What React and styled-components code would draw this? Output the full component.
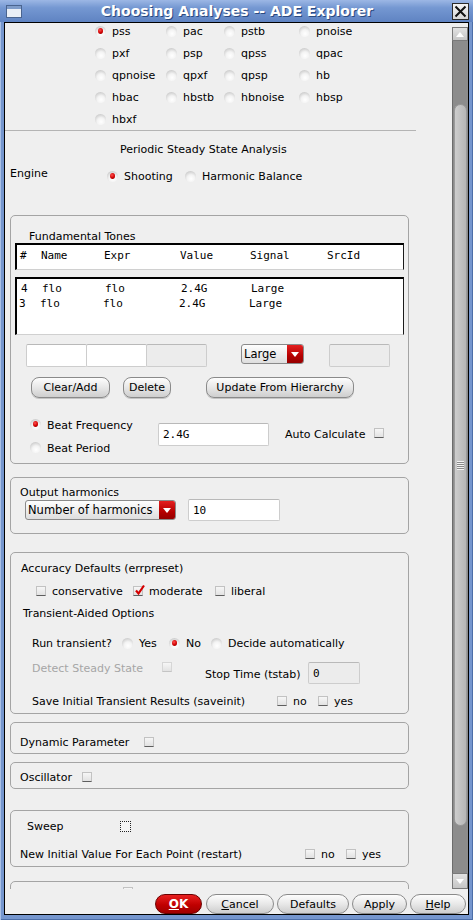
import React from 'react';
import styled, {createGlobalStyle, css} from 'styled-components';

const UI = '"DejaVu Sans", "Liberation Sans", sans-serif';
const MONO = '"DejaVu Sans Mono", "Liberation Mono", monospace';

const GlobalStyle = createGlobalStyle`
    html, body {
        margin: 0;
        padding: 0;
        background: #7596ce;
    }
    body {
        font-family: ${UI};
        font-size: 11px;
        color: #000;
    }
    * {
        box-sizing: border-box;
    }
`;

const Window = styled.div`
    width: 473px;
    height: 920px;
    display: flex;
    flex-direction: column;
    padding: 0 4px 5px;
    background: #7596ce;
    box-shadow: inset 1px 0 0 #a9c0e6, inset -1px 0 0 #4c6ea8, inset 0 -1px 0 #4c6ea8;
`;

const TitleBar = styled.div`
    height: 22px;
    margin: 0 -4px;
    display: flex;
    align-items: center;
    padding: 0 4px 0 6px;
    background: linear-gradient(#9cb7e5 0%, #7598d2 35%, #5f83c2 100%);
`;

const Title = styled.div`
    flex: 1;
    text-align: center;
    font-family: ${UI};
    font-weight: bold;
    font-size: 14px;
    color: #fff;
    text-shadow: 1px 1px 0 #2b4a80;
    white-space: nowrap;
`;

const CloseBox = styled.div`
    width: 17px;
    height: 17px;
    border: 1px solid #2a2a2a;
    background: linear-gradient(#f4f4f4, #d6d6d6);
    display: flex;
    align-items: center;
    justify-content: center;
`;

const Content = styled.div`
    flex: 1;
    border: 1px solid #000;
    background: #efefef;
    display: flex;
    flex-direction: column;
    overflow: hidden;
`;

const MainRow = styled.div`
    height: 866px;
    flex: none;
    display: flex;
`;

const ScrollArea = styled.div`
    flex: 1;
    overflow: hidden;
`;

const ScrollInner = styled.div`
    margin-top: -3px;
    display: flex;
    flex-direction: column;
    align-items: flex-start;
`;

const Scrollbar = styled.div`
    width: 16px;
    flex: none;
    display: flex;
    flex-direction: column;
    padding-top: 4px;
`;

const ArrowBtn = styled.div`
    height: ${p => p.$h}px;
    flex: none;
    background: linear-gradient(#e2e2e2, #c6c6c6);
    border: 1px solid #7a7a7a;
    display: flex;
    align-items: center;
    justify-content: center;
`;

const Track = styled.div`
    height: ${p => p.$h}px;
    flex: none;
    background: #8c8c8c;
    border-left: 1px solid #6c6c6c;
`;

const Thumb = styled.div`
    height: ${p => p.$h}px;
    flex: none;
    background: #8c8c8c;
    border-left: 1px solid #6c6c6c;
    padding: 0 1px;
    display: flex;

    & > div {
        flex: 1;
        border-radius: 7px;
        border: 1px solid #9a9a9a;
        background: linear-gradient(90deg, #cdcdcd, #b6b6b6);
        display: flex;
        align-items: center;
        justify-content: center;
    }
`;

const Grip = styled.div`
    width: 7px;
    height: 9px;
    background: repeating-linear-gradient(#f2f2f2 0 1px, #8a8a8a 1px 2px);
`;

const ButtonBar = styled.div`
    flex: 1;
    display: flex;
    justify-content: flex-end;
    align-items: flex-start;
    padding: 5px 2px 0 0;
    gap: 3px;
`;

const DlgBtn = styled.div`
    width: ${p => p.$w}px;
    height: 20px;
    border-radius: 10px;
    border: 1px solid ${p => (p.$primary ? '#6a0000' : '#8a8a8a')};
    background: ${p => (p.$primary
            ? 'linear-gradient(#e82020, #c00000 55%, #a00000)'
            : 'linear-gradient(#fdfdfd, #e8e8e8 50%, #cdcdcd)')};
    color: ${p => (p.$primary ? '#fff' : '#000')};
    font-weight: ${p => (p.$primary ? 'bold' : 'normal')};
    font-size: ${p => (p.$primary ? 12 : 11)}px;
    margin-right: ${p => p.$mr || 0}px;
    display: flex;
    align-items: center;
    justify-content: center;

    u {
        text-decoration: underline;
    }
`;

const AnalysisGrid = styled.div`
    display: grid;
    grid-template-columns: 71px 58px 75px auto;
    grid-auto-rows: 22px;
    padding-left: 90px;
    width: 411px;
    border-bottom: 1px solid #b4b4b4;
`;

const Line = styled.div`
    height: 14px;
    line-height: 16px;
    margin-top: ${p => p.$mt || 0}px;
    padding-left: ${p => p.$pl || 0}px;
    width: ${p => (p.$w ? `${p.$w}px` : 'auto')};
    color: ${p => (p.$dim ? '#a6a6a6' : '#000')};
    white-space: nowrap;
    flex: none;
`;

const Row = styled.div`
    display: flex;
    align-items: ${p => p.$align || 'center'};
    height: ${p => p.$h || 14}px;
    margin-top: ${p => p.$mt || 0}px;
    margin-left: ${p => p.$ml || 0}px;
    flex: none;
`;

const Opt = styled.div`
    display: flex;
    align-items: center;
    gap: 6px;
    height: ${p => p.$h || 14}px;
    line-height: 14px;
    width: ${p => (p.$w ? `${p.$w}px` : 'auto')};
    white-space: nowrap;
    flex: none;

    & > span:last-child {
        padding-top: 2px;
    }
`;

const RadioDot = styled.span`
    width: 11px;
    height: 11px;
    border-radius: 50%;
    flex: none;
    position: relative;
    background: radial-gradient(circle at 55% 70%, #ffffff 0%, #f3f3f3 40%, #cfcfcf 75%, #9c9c9c 100%);
    ${p => p.$on && css`
        &::after {
            content: '';
            position: absolute;
            left: 3px;
            top: 2px;
            width: 5px;
            height: 6px;
            border-radius: 50%;
            background: radial-gradient(circle at 40% 35%, #ff5050, #d00000 55%, #7a0000);
        }
    `}
`;

const CheckBox = styled.span`
    width: ${p => (p.$dotted ? 11 : 10)}px;
    height: ${p => (p.$dotted ? 11 : 10)}px;
    flex: none;
    position: relative;
    margin-top: ${p => p.$mt || 0}px;
    margin-left: ${p => p.$ml || 0}px;
    background: linear-gradient(#f6f6f6, #e2e2e2);
    border: 1px solid ${p => (p.$dim ? '#d6d6d6' : '#c2c2c2')};
    border-bottom-color: ${p => (p.$dim ? '#c4c4c4' : '#5e5e5e')};
    ${p => p.$dotted && css`
        border: 1px dotted #222;
        background: #f4f4f4;
    `}

    svg {
        position: absolute;
        left: 0;
        top: -3px;
    }
`;

const Group = styled.div`
    margin: ${p => p.$mt}px 0 0 5px;
    width: 399px;
    height: ${p => p.$h}px;
    border: 1px solid #a4a4a4;
    border-radius: 5px;
    display: flex;
    flex-direction: column;
    align-items: flex-start;
    flex: none;
    overflow: hidden;
`;

const TableBox = styled.div`
    margin: ${p => p.$mt}px 0 0 4px;
    width: 389px;
    height: ${p => p.$h}px;
    background: #fff;
    border-top: 2px solid #000;
    border-left: 2px solid #000;
    border-right: 1px solid #1a1a1a;
    border-bottom: 1px solid #d0d0d0;
    padding-top: ${p => p.$pt}px;
    font-family: ${MONO};
    font-size: 11px;
    flex: none;
`;

const TableRow = styled.div`
    display: grid;
    grid-template-columns: 21px 63px 76px 70px 77px auto;
    height: 15px;
    line-height: 15px;
    padding-left: ${p => p.$pl}px;
    white-space: nowrap;
`;

const Field = styled.div`
    width: ${p => p.$w}px;
    height: ${p => p.$h || 23}px;
    margin-left: ${p => p.$ml || 0}px;
    margin-top: ${p => p.$mt || 0}px;
    background: ${p => (p.$off ? '#ececec' : '#fff')};
    border: 1px solid #cdcdcd;
    border-top-color: #b9b9b9;
    border-radius: 2px;
    padding-left: 4px;
    font-family: ${MONO};
    font-size: 11px;
    display: flex;
    align-items: center;
    flex: none;
`;

const Select = styled.div`
    width: ${p => p.$w}px;
    height: 20px;
    margin-left: ${p => p.$ml || 0}px;
    border: 1px solid #8a8a8a;
    border-radius: 3px;
    background: linear-gradient(#fefefe, #dedede);
    display: flex;
    overflow: hidden;
    flex: none;
`;

const SelectText = styled.span`
    flex: 1;
    padding-left: ${p => p.$pl || 2}px;
    font-size: ${p => p.$fs || 11}px;
    line-height: 19px;
    white-space: nowrap;
`;

const SelectArrow = styled.span`
    width: 16px;
    background: linear-gradient(#e42020, #b50000 60%, #960000);
    display: flex;
    align-items: center;
    justify-content: center;
`;

const Btn = styled.div`
    width: ${p => p.$w}px;
    height: 21px;
    margin-left: ${p => p.$ml || 0}px;
    border: 1px solid #8a8a8a;
    border-radius: 8px;
    background: linear-gradient(#fdfdfd, #e7e7e7 50%, #cecece);
    box-shadow: 0 1px 0 #c4c4c4;
    display: flex;
    align-items: center;
    justify-content: center;
    white-space: nowrap;
    flex: none;
`;

const RadioCol = styled.div`
    width: 128px;
    margin-left: 19px;
    display: flex;
    flex-direction: column;
    flex: none;
`;

const Arrow = ({down}) => (
    <svg width="8" height="5" viewBox="0 0 8 5">
        <polygon points={down ? '0,0 8,0 4,5' : '0,5 8,5 4,0'} fill="#fff"/>
    </svg>
);

const Radio = ({on, label, w, h}) => (
    <Opt $w={w} $h={h}>
        <RadioDot $on={on}/>
        <span>{label}</span>
    </Opt>
);

const Check = ({on, label, w, dim}) => (
    <Opt $w={w}>
        <CheckBox $dim={dim}>
            {on && (
                <svg width="12" height="12" viewBox="0 0 12 12">
                    <path d="M2 6.5 L4.5 9.5 L10 1.5" stroke="#d40000" strokeWidth="2.2" fill="none"/>
                </svg>
            )}
        </CheckBox>
        <span>{label}</span>
    </Opt>
);

const analyses = [
    'pss', 'pac', 'pstb', 'pnoise',
    'pxf', 'psp', 'qpss', 'qpac',
    'qpnoise', 'qpxf', 'qpsp', 'hb',
    'hbac', 'hbstb', 'hbnoise', 'hbsp',
    'hbxf'
];

const tones = [
    {pl: 4, cells: ['4', 'flo', 'flo', '2.4G', 'Large', '']},
    {pl: 2, cells: ['3', 'flo', 'flo', '2.4G', 'Large', '']}
];

export default function App() {
    return (
        <Window>
            <GlobalStyle/>
            <TitleBar>
                <svg width="16" height="13" viewBox="0 0 16 13">
                    <rect x="0.5" y="0.5" width="15" height="12" fill="#e9eef6" stroke="#4a648f"/>
                    <rect x="1" y="1" width="14" height="3" fill="#7f9cc9"/>
                </svg>
                <Title>Choosing Analyses -- ADE Explorer</Title>
                <CloseBox>
                    <svg width="13" height="13" viewBox="0 0 13 13">
                        <path d="M1.5 1.5 L11.5 11.5 M11.5 1.5 L1.5 11.5" stroke="#111" strokeWidth="2"/>
                    </svg>
                </CloseBox>
            </TitleBar>
            <Content>
                <MainRow>
                    <ScrollArea>
                        <ScrollInner>
                            <AnalysisGrid>
                                {analyses.map(a => (
                                    <Radio key={a} label={a} on={a === 'pss'} h={22}/>
                                ))}
                            </AnalysisGrid>
                            <Line $mt={11} $pl={115}>Periodic Steady State Analysis</Line>
                            <Row $mt={13} $align="flex-start">
                                <Line $pl={5} $w={102} $mt={-3}>Engine</Line>
                                <Radio on label="Shooting" w={78}/>
                                <Radio label="Harmonic Balance"/>
                            </Row>

                            <Group $mt={32} $h={249}>
                                <Line $mt={13} $pl={18}>Fundamental Tones</Line>
                                <TableBox $mt={0} $h={27} $pt={3}>
                                    <TableRow $pl={3}>
                                        <span>#</span><span>Name</span><span>Expr</span>
                                        <span>Value</span><span>Signal</span><span>SrcId</span>
                                    </TableRow>
                                </TableBox>
                                <TableBox $mt={7} $h={58} $pt={2}>
                                    {tones.map((t, i) => (
                                        <TableRow key={i} $pl={t.pl}>
                                            {t.cells.map((c, j) => <span key={j}>{c}</span>)}
                                        </TableRow>
                                    ))}
                                </TableBox>
                                <Row $mt={9} $h={23} $ml={15} $align="flex-start">
                                    <Field $w={61}/>
                                    <Field $w={61} $ml={-1}/>
                                    <Field $w={61} $ml={-1} $off/>
                                    <Select $w={63} $ml={34}>
                                        <SelectText $fs={11.5}>Large</SelectText>
                                        <SelectArrow><Arrow down/></SelectArrow>
                                    </Select>
                                    <Field $w={61} $ml={25} $off/>
                                </Row>
                                <Row $mt={10} $h={21} $ml={20}>
                                    <Btn $w={79}>Clear/Add</Btn>
                                    <Btn $w={48} $ml={13}>Delete</Btn>
                                    <Btn $w={148} $ml={35}>Update From Hierarchy</Btn>
                                </Row>
                                <Row $mt={15} $h={46} $align="flex-start">
                                    <RadioCol>
                                        <Radio on label="Beat Frequency" h={23}/>
                                        <Radio label="Beat Period" h={23}/>
                                    </RadioCol>
                                    <Field $w={111} $mt={10}>2.4G</Field>
                                    <Line $mt={14} $w={105} $pl={16}>Auto Calculate</Line>
                                    <CheckBox $mt={15}/>
                                </Row>
                            </Group>

                            <Group $mt={13} $h={57}>
                                <Line $mt={7} $pl={9}>Output harmonics</Line>
                                <Row $h={22}>
                                    <Select $w={151} $ml={14}>
                                        <SelectText $fs={11.5}>Number of harmonics</SelectText>
                                        <SelectArrow><Arrow down/></SelectArrow>
                                    </Select>
                                    <Field $w={92} $h={22} $ml={12}>10</Field>
                                </Row>
                            </Group>

                            <Group $mt={18} $h={162}>
                                <Line $mt={8} $pl={10}>Accuracy Defaults (errpreset)</Line>
                                <Row $mt={9} $ml={25}>
                                    <Check label="conservative" w={97}/>
                                    <Check on label="moderate" w={82}/>
                                    <Check label="liberal"/>
                                </Row>
                                <Line $mt={8} $pl={12}>Transient-Aided Options</Line>
                                <Row $mt={16} $ml={21}>
                                    <Line $w={90}>Run transient?</Line>
                                    <Radio label="Yes" w={47}/>
                                    <Radio on label="No" w={42}/>
                                    <Radio label="Decide automatically"/>
                                </Row>
                                <Row $mt={12} $ml={21} $h={22} $align="flex-start">
                                    <Line $dim $w={130} $mt={-1}>Detect Steady State</Line>
                                    <CheckBox $dim/>
                                    <Line $w={136} $mt={5} $pl={33}>Stop Time (tstab)</Line>
                                    <Field $w={52} $h={22} $off>0</Field>
                                </Row>
                                <Row $mt={10} $ml={21}>
                                    <Line $w={245}>Save Initial Transient Results (saveinit)</Line>
                                    <Check label="no" w={41}/>
                                    <Check label="yes"/>
                                </Row>
                            </Group>

                            <Group $mt={8} $h={32}>
                                <Row $mt={12} $ml={9}>
                                    <Line $w={124}>Dynamic Parameter</Line>
                                    <CheckBox/>
                                </Row>
                            </Group>

                            <Group $mt={8} $h={27}>
                                <Row $mt={7} $ml={9}>
                                    <Line $w={62}>Oscillator</Line>
                                    <CheckBox/>
                                </Row>
                            </Group>

                            <Group $mt={21} $h={57}>
                                <Row $mt={8} $ml={16}>
                                    <Line $w={93}>Sweep</Line>
                                    <CheckBox $dotted/>
                                </Row>
                                <Row $mt={14} $ml={9}>
                                    <Line $w={285}>New Initial Value For Each Point (restart)</Line>
                                    <Check label="no" w={41}/>
                                    <Check label="yes"/>
                                </Row>
                            </Group>

                            <Group $mt={14} $h={40}>
                                <CheckBox $mt={5} $ml={112}/>
                            </Group>
                        </ScrollInner>
                    </ScrollArea>
                    <Scrollbar>
                        <ArrowBtn $h={14}><Arrow/></ArrowBtn>
                        <Track $h={63}/>
                        <Thumb $h={722}>
                            <div><Grip/></div>
                        </Thumb>
                        <Track $h={47}/>
                        <ArrowBtn $h={16}><Arrow down/></ArrowBtn>
                    </Scrollbar>
                </MainRow>
                <ButtonBar>
                    <DlgBtn $primary $w={47} $mr={1}><u>O</u>K</DlgBtn>
                    <DlgBtn $w={68}><u>C</u>ancel</DlgBtn>
                    <DlgBtn $w={72}>Defaults</DlgBtn>
                    <DlgBtn $w={55}>Apply</DlgBtn>
                    <DlgBtn $w={56}><u>H</u>elp</DlgBtn>
                </ButtonBar>
            </Content>
        </Window>
    );
}
